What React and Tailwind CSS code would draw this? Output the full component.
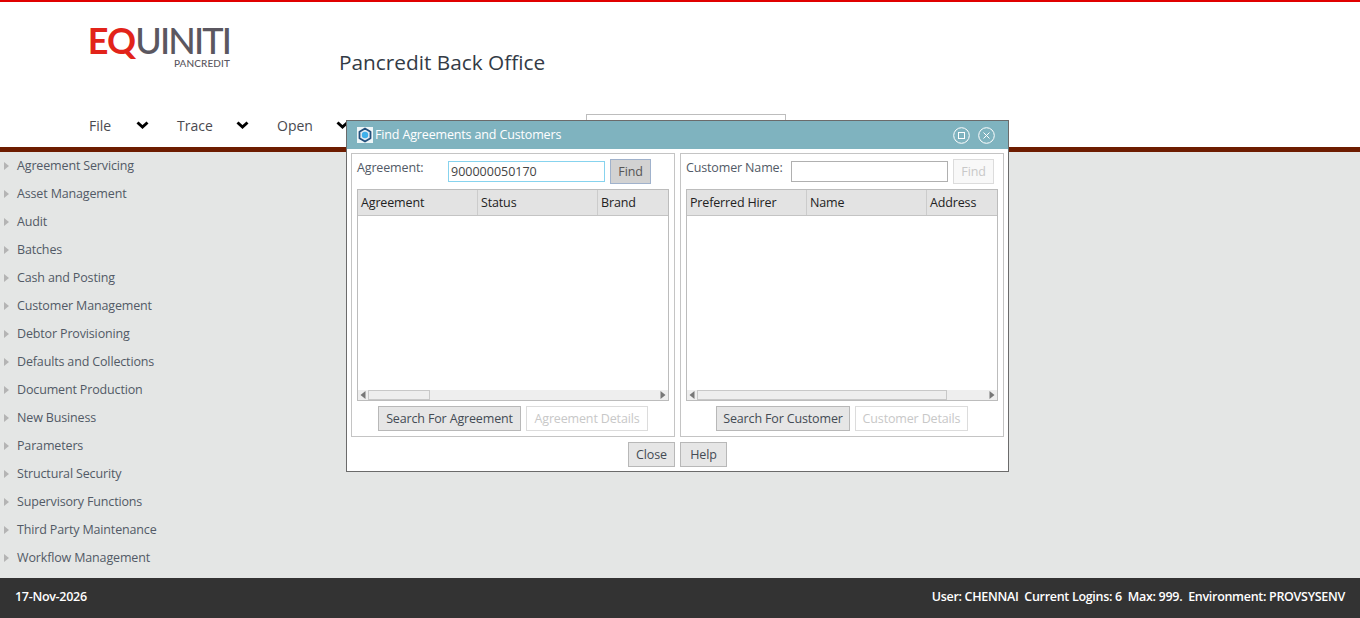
import React from 'react';

const sideItems = [
  'Agreement Servicing',
  'Asset Management',
  'Audit',
  'Batches',
  'Cash and Posting',
  'Customer Management',
  'Debtor Provisioning',
  'Defaults and Collections',
  'Document Production',
  'New Business',
  'Parameters',
  'Structural Security',
  'Supervisory Functions',
  'Third Party Maintenance',
  'Workflow Management',
];

const Chevron = () => (
  <svg width="13" height="9" viewBox="0 0 13 9">
    <path d="M1.5 1.5 L6.5 6 L11.5 1.5" fill="none" stroke="#000" strokeWidth="3" />
  </svg>
);

const Btn = ({ children, disabled, className = '' }) => (
  <div
    className={`h-[25px] pt-[1px] flex items-center justify-center border text-[12.5px] ${
      disabled ? 'border-[#dcdcdc] bg-white text-[#c8c8c8]' : 'border-[#b8b8b8] bg-[#e6e6e6] text-[#444b54]'
    } ${className}`}
  >
    {children}
  </div>
);

const Arrow = ({ dir }) => (
  <svg width="6" height="8" viewBox="0 0 6 8">
    <path d={dir === 'left' ? 'M5.5 0 L0.5 4 L5.5 8 Z' : 'M0.5 0 L5.5 4 L0.5 8 Z'} fill="#777" />
  </svg>
);

const Grid = ({ cols, thumb }) => (
  <div className="w-[312px] h-[212px] border border-[#bcbcbc] flex flex-col bg-white">
    <div className="h-[26px] bg-[#e3e3e3] border-b border-[#c4c4c4] flex shrink-0">
      {cols.map((c, i) => (
        <div
          key={c}
          className={`h-full pl-[3px] pt-[1px] flex items-center text-[12.5px] text-[#222] ${
            i < 2 ? 'w-[120px] border-r border-[#cccccc]' : 'flex-1'
          }`}
        >
          {c}
        </div>
      ))}
    </div>
    <div className="flex-1" />
    <div className="h-[10px] bg-[#eeeeee] flex items-center">
      <div className="w-[10px] flex justify-center">
        <Arrow dir="left" />
      </div>
      <div className={`h-[10px] bg-[#eeeeee] border border-[#c8c8c8] ${thumb}`} />
      <div className="flex-1" />
      <div className="w-[10px] flex justify-center">
        <Arrow dir="right" />
      </div>
    </div>
  </div>
);

export default function App() {
  return (
    <div className="relative w-[1360px] h-[618px] overflow-hidden flex flex-col bg-[#e4e6e5] tracking-[-0.15px] font-['Open_Sans','Noto_Sans',sans-serif]">
      <header className="h-[152px] shrink-0 bg-white border-t-2 border-t-[#e00000] border-b-[5px] border-b-[#6d1c00] flex flex-col">
        <div className="h-[101px] flex pl-[88px]">
          <div className="w-[251px] pt-[24px] shrink-0">
            <div className="w-[142px] flex flex-col items-end">
              <div className="h-[28px] flex items-center font-['Lato',sans-serif] text-[36px] whitespace-nowrap">
                <span className="inline-block leading-[28px] font-bold text-[#e2231a] tracking-[-0.8px]">EQ</span>
                <span className="inline-block leading-[28px] text-[#5b5760] tracking-[-1.9px] font-medium">UINITI</span>
              </div>
              <div className="mt-[3px] font-['Lato',sans-serif] text-[10px] leading-[12px] font-medium text-[#5b5760] tracking-[0.1px]">PANCREDIT</div>
            </div>
          </div>
          <div className="pt-[45px] text-[20.8px] leading-[30px] tracking-normal text-[#333b46]">Pancredit Back Office</div>
        </div>
        <nav className="flex pl-[89px] text-[14px] tracking-normal text-[#4a4a50] h-[44px] items-start">
          <div className="w-[88px] h-[20px] mt-[12px] flex items-center">
            <span className="w-[47px]">File</span>
            <Chevron />
          </div>
          <div className="w-[100px] h-[20px] mt-[12px] flex items-center">
            <span className="w-[59px]">Trace</span>
            <Chevron />
          </div>
          <div className="w-[100px] h-[20px] mt-[12px] flex items-center">
            <span className="w-[59px]">Open</span>
            <Chevron />
          </div>
          <div className="ml-[209px] mt-[11px] w-[200px] h-[24px] border border-[#bdbdbd] bg-white" />
        </nav>
      </header>

      <main className="flex-1 pl-[4px]">
        {sideItems.map((s) => (
          <div key={s} className="h-[28px] flex items-center text-[12.5px] text-[#525a66]">
            <svg width="5" height="8" viewBox="0 0 5 8" className="mr-[8px] shrink-0">
              <path d="M0 0 L5 4 L0 8 Z" fill="#b4b4b4" />
            </svg>
            {s}
          </div>
        ))}
      </main>

      <footer className="h-[40px] shrink-0 bg-[#333333] text-white text-[12.5px] tracking-[-0.3px] font-semibold flex items-center justify-between px-[15px] pb-[1px]">
        <span>17-Nov-2026</span>
        <span className="whitespace-pre">User: CHENNAI  Current Logins: 6  Max: 999.  Environment: PROVSYSENV</span>
      </footer>

      {/* dialog */}
      <div className="absolute left-[346px] top-[120px] w-[663px] h-[352px] border border-[#6b6b6b] bg-white flex flex-col">
        <div className="h-[28px] shrink-0 bg-[#7fb3bf] flex items-center pl-[10px] pr-[13px] text-white text-[12.5px]">
          <div className="w-[16px] h-[16px] bg-[#eef6f8] flex items-center justify-center mr-[2px]">
            <svg width="16" height="16" viewBox="0 0 16 16">
              <path d="M8 1.5 L13.5 4.7 V11.3 L8 14.5 L2.5 11.3 V4.7 Z" fill="#dfeaf2" stroke="#24507c" strokeWidth="1.8" strokeLinejoin="round" />
              <circle cx="8" cy="8" r="3.2" fill="#3fb0ea" />
            </svg>
          </div>
          <span className="flex-1 pt-[1px]">Find Agreements and Customers</span>
          <div className="flex gap-[8px]">
            <svg width="17" height="17" viewBox="0 0 17 17" fill="none" stroke="#fff">
              <circle cx="8.5" cy="8.5" r="7.8" />
              <rect x="5.5" y="5.5" width="6" height="6" />
            </svg>
            <svg width="17" height="17" viewBox="0 0 17 17" fill="none" stroke="#fff">
              <circle cx="8.5" cy="8.5" r="7.8" />
              <path d="M5.5 5.5 L11.5 11.5 M11.5 5.5 L5.5 11.5" />
            </svg>
          </div>
        </div>

        <div className="flex gap-[5px] pl-[4px] pt-[4px]">
          <section className="w-[324px] h-[284px] border border-[#c4c4c4] pl-[5px] flex flex-col">
            <div className="h-[35px] shrink-0 flex items-start pt-[5px]">
              <div className="w-[91px] text-[12.5px] leading-[18px] text-[#525a66]">Agreement:</div>
              <div className="w-[157px] h-[21px] mt-[2px] pt-[1px] border border-[#87d3ee] flex items-center pl-[2px] text-[12.5px] tracking-normal text-[#444]">900000050170</div>
              <div className="w-[41px] h-[25px] ml-[5px] pt-[1px] border border-[#a0b2cc] bg-[#d2d2d2] flex items-center justify-center text-[12.5px] text-[#555]">Find</div>
            </div>
            <Grid cols={['Agreement', 'Status', 'Brand']} thumb="w-[62px]" />
            <div className="flex justify-center gap-[5px] mt-[5px] pr-[5px]">
              <Btn className="w-[143px]">Search For Agreement</Btn>
              <Btn disabled className="w-[122px]">Agreement Details</Btn>
            </div>
          </section>
          <section className="w-[324px] h-[284px] border border-[#c4c4c4] pl-[5px] flex flex-col">
            <div className="h-[35px] shrink-0 flex items-start pt-[5px]">
              <div className="w-[105px] text-[12.5px] leading-[18px] text-[#525a66]">Customer Name:</div>
              <div className="w-[157px] h-[21px] mt-[2px] border border-[#b0b0b0]" />
              <div className="w-[41px] h-[25px] ml-[5px] pt-[1px] border border-[#dcdcdc] bg-[#f8f8f8] flex items-center justify-center text-[12.5px] text-[#c8c8c8]">Find</div>
            </div>
            <Grid cols={['Preferred Hirer', 'Name', 'Address']} thumb="w-[250px]" />
            <div className="flex justify-center gap-[5px] mt-[5px] pr-[5px]">
              <Btn className="w-[134px]">Search For Customer</Btn>
              <Btn disabled className="w-[113px]">Customer Details</Btn>
            </div>
          </section>
        </div>

        <div className="flex justify-center gap-[5px] mt-[5px]">
          <Btn className="w-[47px]">Close</Btn>
          <Btn className="w-[47px]">Help</Btn>
        </div>
      </div>
    </div>
  );
}
